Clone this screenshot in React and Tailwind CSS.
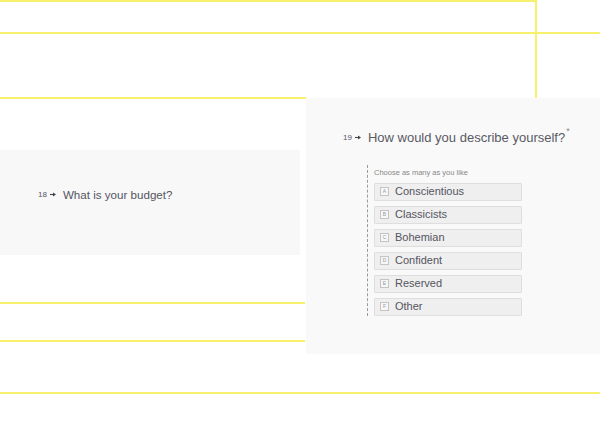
const options = [
  { key: 'A', label: 'Conscientious' },
  { key: 'B', label: 'Classicists' },
  { key: 'C', label: 'Bohemian' },
  { key: 'D', label: 'Confident' },
  { key: 'E', label: 'Reserved' },
  { key: 'F', label: 'Other' },
];

// yellow guide lines drawn over the canvas
const guides = [
  'top-0 left-0 w-[536px] h-[2px]',
  'top-0 left-[535px] w-[2px] h-[98px]',
  'top-[32px] left-0 w-[600px] h-[2px]',
  'top-[97px] left-0 w-[306px] h-[2px]',
  'top-[302px] left-0 w-[305px] h-[2px]',
  'top-[340px] left-0 w-[305px] h-[2px]',
  'top-[392px] left-0 w-[600px] h-[2px]',
];

function QuestionNumber({ n }) {
  return (
    <span className="flex items-center text-[8px] text-[#55555f] mr-[7px]">
      {n}
      <svg width="6" height="5" viewBox="0 0 6 5" className="ml-[3px]">
        <path d="M0 2.5h3.5" stroke="#44444c" strokeWidth="1.1" />
        <path d="M3 0.4L6 2.5L3 4.6z" fill="#44444c" />
      </svg>
    </span>
  );
}

function Option({ k, label }) {
  return (
    <div className="flex items-center h-[18px] w-[148px] bg-[#efefef] border border-[#dedede] rounded-[1px] pl-[5px]">
      <span className="flex items-center justify-center w-[9px] h-[9px] border border-[#c4c4c4] bg-[#f7f7f7] text-[5px] text-[#999] leading-none">
        {k}
      </span>
      <span className="ml-[6px] text-[11px] text-[#55555f]">{label}</span>
    </div>
  );
}

export default function App() {
  return (
    <div
      className="relative w-[600px] h-[424px] bg-white overflow-hidden"
      style={{ fontFamily: '"Liberation Sans", Arial, sans-serif' }}
    >
      <div className="flex pt-[98px]">
        {/* left card */}
        <div className="w-[300px] pt-[52px]">
          <div className="h-[105px] bg-[#f8f8f9] flex items-center pl-[38px] pb-[16px]">
            <QuestionNumber n="18" />
            <span className="text-[11.6px] text-[#55555f]">What is your budget?</span>
          </div>
        </div>

        {/* right card */}
        <div className="ml-[6px] w-[294px] h-[256px] bg-[#f9f9f9] pt-[30px]">
          <div className="flex items-center pl-[37px]">
            <QuestionNumber n="19" />
            <span className="text-[13px] text-[#5a5a64]">How would you describe yourself?</span>
            <span className="self-start text-[9px] text-[#888] ml-[1px] -mt-[3px]">*</span>
          </div>
          <div className="ml-[61px] mt-[17px] border-l border-dashed border-[#9a9a9a] pl-[6px] pt-[3px]">
            <div className="text-[7.5px] text-[#888] mb-[5px] leading-[10px]">Choose as many as you like</div>
            <div className="flex flex-col gap-[5px]">
              {options.map((o) => (
                <Option key={o.key} k={o.key} label={o.label} />
              ))}
            </div>
          </div>
        </div>
      </div>

      {guides.map((g) => (
        <div key={g} className={`absolute bg-[#f6f06a] ${g}`} />
      ))}
    </div>
  );
}
